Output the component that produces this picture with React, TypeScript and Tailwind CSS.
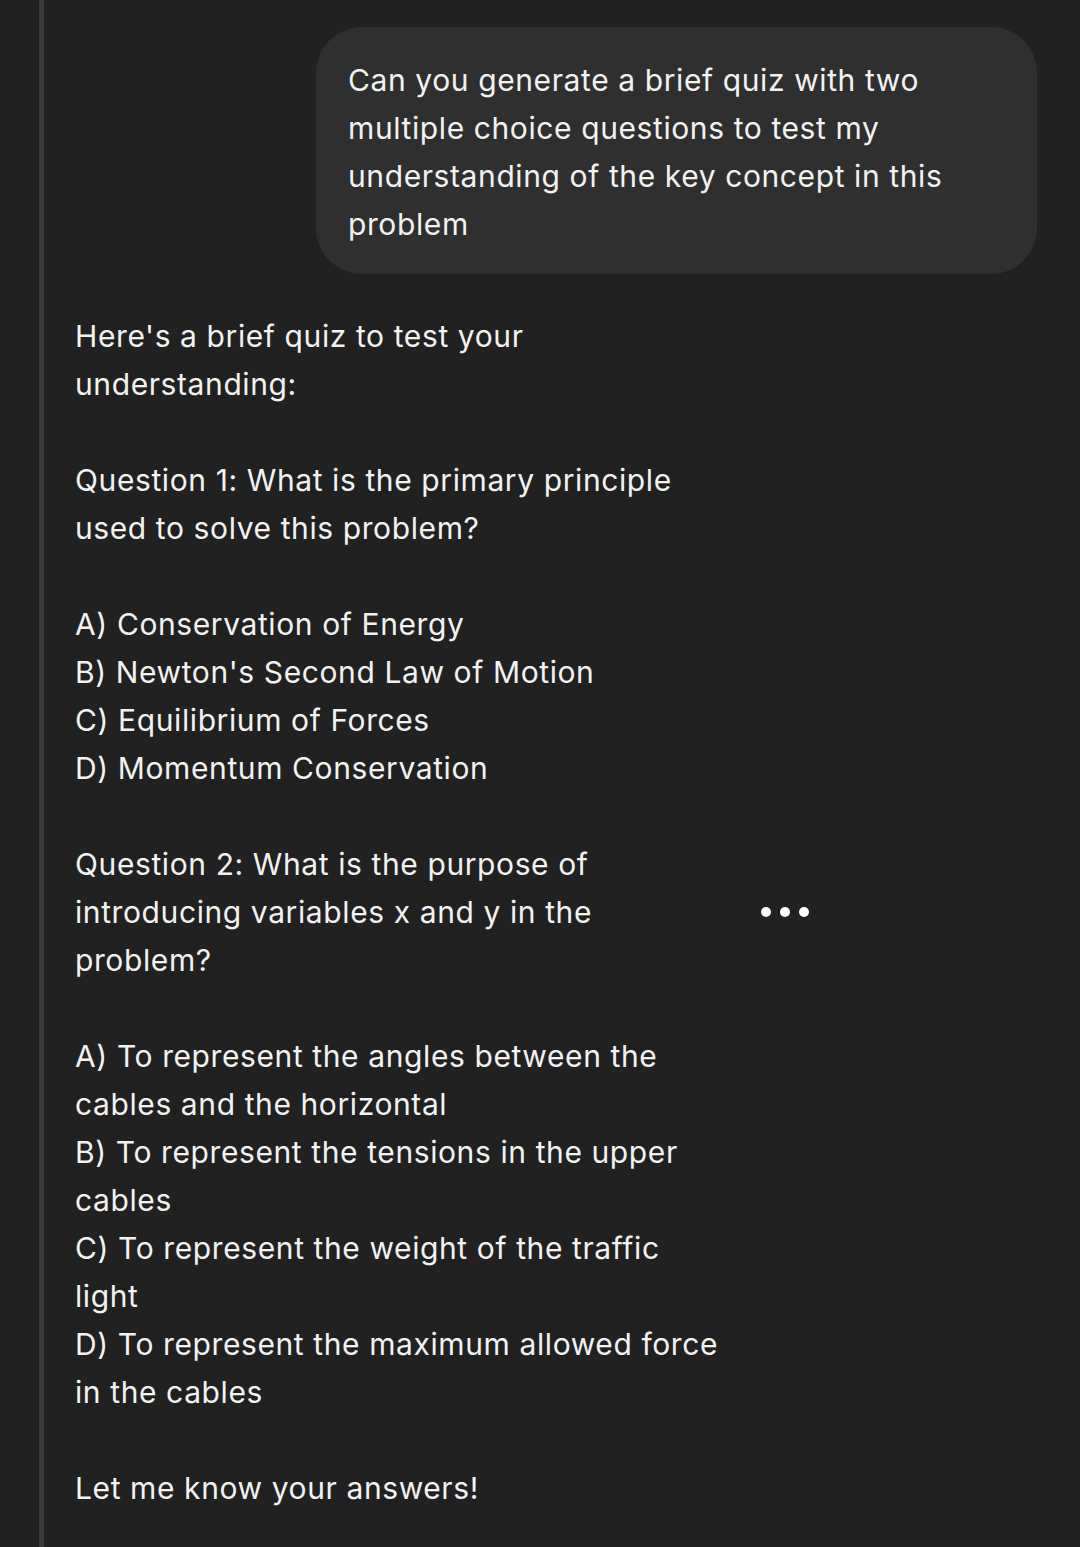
import React from "react";

const answerLines: (string | null)[] = [
  "Here's a brief quiz to test your",
  "understanding:",
  null,
  "Question 1: What is the primary principle",
  "used to solve this problem?",
  null,
  "A) Conservation of Energy",
  "B) Newton's Second Law of Motion",
  "C) Equilibrium of Forces",
  "D) Momentum Conservation",
  null,
  "Question 2: What is the purpose of",
  "introducing variables x and y in the",
  "problem?",
  null,
  "A) To represent the angles between the",
  "cables and the horizontal",
  "B) To represent the tensions in the upper",
  "cables",
  "C) To represent the weight of the traffic",
  "light",
  "D) To represent the maximum allowed force",
  "in the cables",
  null,
  "Let me know your answers!",
];

const promptLines = [
  "Can you generate a brief quiz with two",
  "multiple choice questions to test my",
  "understanding of the key concept in this",
  "problem",
];

export default function App() {
  return (
    <div
      className="relative flex h-[1547px] w-[1080px] overflow-hidden bg-[#212121] text-[#f2f2f2]"
      style={{ fontFamily: "Inter, 'Noto Sans', sans-serif" }}
    >
      <div className="ml-[39px] w-[5px] shrink-0 bg-[#3a3a3a]" />
      <div className="flex flex-1 flex-col">
        <div className="flex justify-end pr-[43px] pt-[27px]">
          <div className="w-[721px] rounded-[46px] bg-[#2f2f2f] px-[32px] pb-[26px] pt-[29px] text-[30px] leading-[48px] tracking-[0.6px]">
            {promptLines.map((l, i) => (
              <div key={i} className="whitespace-nowrap">
                {l}
              </div>
            ))}
          </div>
        </div>
        <div className="mt-[38px] pl-[31px] text-[30px] leading-[48px] tracking-[0.6px]">
          {answerLines.map((l, i) =>
            l === null ? (
              <div key={i} className="h-[48px]" />
            ) : (
              <div key={i} className="whitespace-nowrap">
                {l}
              </div>
            )
          )}
        </div>
      </div>
      <div className="absolute left-[761px] top-[907px] flex gap-[9px]">
        <span className="h-[10px] w-[10px] rounded-full bg-white" />
        <span className="h-[10px] w-[10px] rounded-full bg-white" />
        <span className="h-[10px] w-[10px] rounded-full bg-white" />
      </div>
    </div>
  );
}
